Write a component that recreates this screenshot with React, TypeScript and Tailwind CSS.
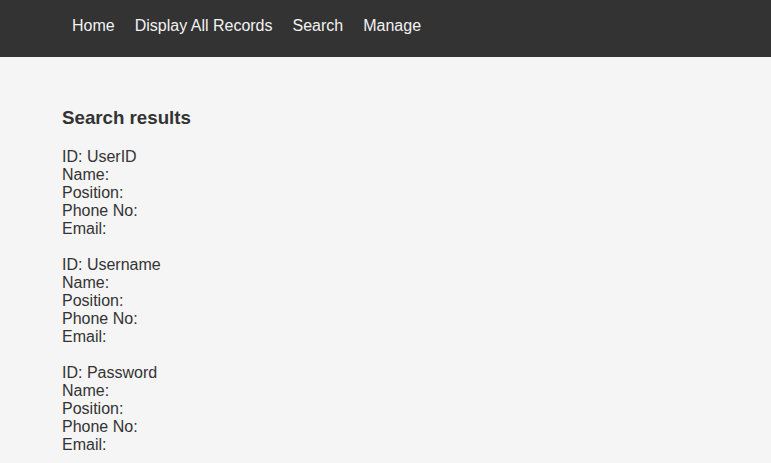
const records = ["UserID", "Username", "Password"];

const navLinks = ["Home", "Display All Records", "Search", "Manage"];

const App: React.FC = () => {
  return (
    <div
      className="min-h-[463px] w-full bg-[#f5f5f5] text-[#333] text-[16px] leading-[18px]"
      style={{ fontFamily: '"Liberation Sans", Arial, sans-serif' }}
    >
      <nav className="h-[57px] bg-[#333] px-[62px]">
        <ul className="flex pt-[17px]">
          {navLinks.map((link) => (
            <li key={link}>
              <a className="block px-[10px] text-[16px] leading-[18px] text-[#f2f2f2]">
                {link}
              </a>
            </li>
          ))}
        </ul>
      </nav>
      <div className="px-[62px] pt-[50px]">
        <h3 className="text-[18.72px] leading-[22px] font-bold mb-[19px]">Search results</h3>
        {records.map((id) => (
          <div key={id} className="mb-[18px]">
            <div>ID: {id}</div>
            <div>Name:</div>
            <div>Position:</div>
            <div>Phone No:</div>
            <div>Email:</div>
          </div>
        ))}
      </div>
    </div>
  );
};

export default App;
